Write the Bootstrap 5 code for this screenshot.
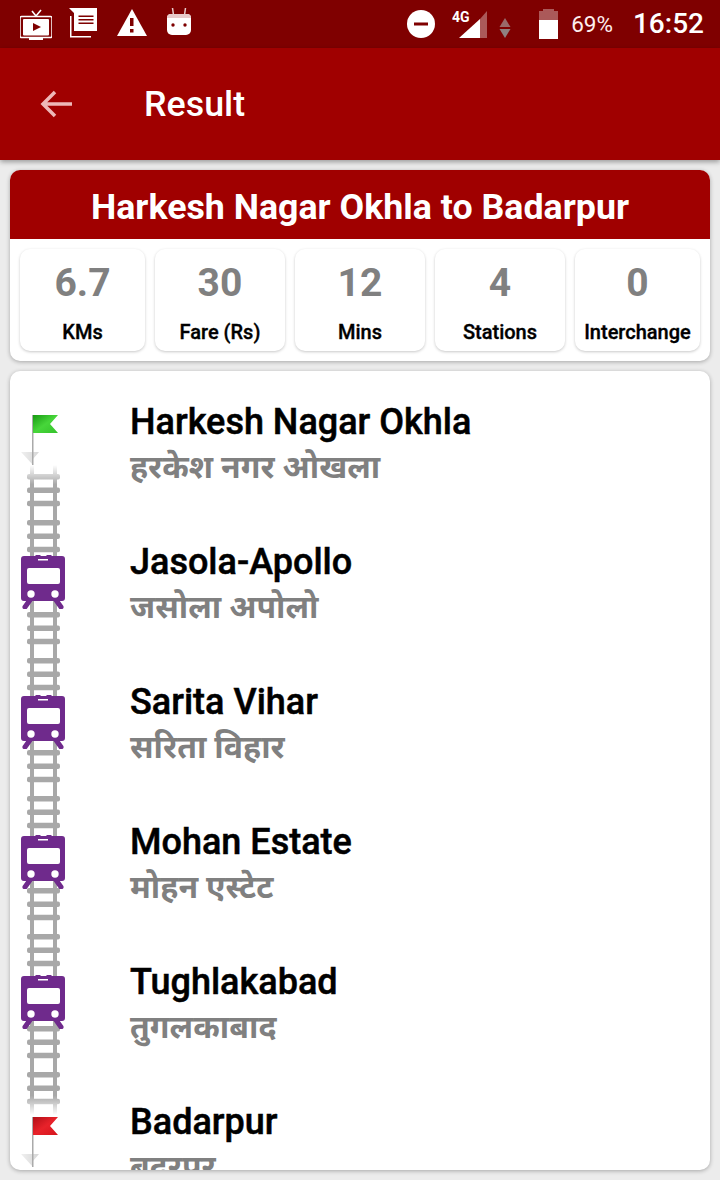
<!DOCTYPE html>
<html lang="en"><head><meta charset="utf-8"><title>Result</title>
<link rel="stylesheet" href="https://cdn.jsdelivr.net/npm/bootstrap@5.3.0/dist/css/bootstrap.min.css">
<style>
html,body{height:1180px;overflow:hidden}
body{background:#ececec;font-family:Roboto,"Noto Sans","Noto Sans Devanagari","Lohit Devanagari",sans-serif;color:#000}
.sbar{height:48px;background:#7f0000;color:#fff;padding:0 16px 0 20px}
.sbar svg{display:block;flex:none}
.ic-doc{margin-left:17px;margin-top:-2px}
.ic-warn{margin-left:18px;margin-top:-2px}
.ic-bot{margin-left:20px;margin-top:-4px}
.ic-sig{margin-left:17px}
.ic-arr{margin-left:11px;margin-top:7px}
.ic-bat{margin-left:28px}
.pct{font-size:22.5px;line-height:48px;margin-left:13px;color:#fdeeee}
.clock{font-size:28px;line-height:48px;font-weight:500;margin-left:20px}
.tbar{height:112px;background:#a00000;color:#fff;box-shadow:0 2px 5px rgba(0,0,0,.35);padding-left:38px;position:relative}
.ttl{font-size:35.8px;font-weight:500;margin-left:70px;margin-top:1px}
.pane{margin:10px 10px 0;background:#fff;border-radius:10px;box-shadow:0 1px 4px rgba(0,0,0,.3);overflow:hidden}
.phead{height:69px;background:#a00000;color:#fff;font-size:35.75px;font-weight:700;line-height:74px;text-align:center}
.stats{padding:10px;gap:10px;height:122px}
.tile{background:#fff;border-radius:10px;box-shadow:0 1px 3px rgba(0,0,0,.22);text-align:center;height:102px}
.tile:first-child,.tile:last-child{flex:0 0 125px}
.tile:not(:first-child):not(:last-child){flex:0 0 130px}
.num{font-size:39px;font-weight:700;color:#808080;line-height:46px;margin-top:11px}
.lbl{font-size:20px;font-weight:500;line-height:24px;margin-top:14px;white-space:nowrap;-webkit-text-stroke:.35px currentColor}
.route{height:799px;position:relative}
.rail{position:absolute;left:17px;top:94px}
.stop{height:140px;position:relative}
.mk{width:120px;flex:none;padding-left:11px}
.mk-train{margin-top:44px}
.mk-flag{margin-top:44px}
.mk-flag2{margin-top:46px}
.nm{font-size:36px;font-weight:500;line-height:40px;padding-top:31px;-webkit-text-stroke:.5px currentColor}
.hi{font-size:32px;font-weight:700;line-height:40px;color:#808080;margin-top:5px}
</style></head><body>
<div class="sbar d-flex align-items-center">
<svg width="32" height="32" viewBox="0 0 32 32"><path d="M1.500 8.500h29a1.500 1.500 0 0 1 1.500 1.500v18a1.500 1.500 0 0 1-1.500 1.500h-29A1.500 1.500 0 0 1 0 28V10a1.500 1.500 0 0 1 1.500-1.500z" fill="none" stroke="#fff" stroke-width="1.500"/><rect x="3" y="11" width="26" height="16.500" rx="1" fill="#fff"/><path d="M12 3l4 5 5-6" fill="none" stroke="#fff" stroke-width="1.600"/><path d="M9 30h14v2H9z" fill="#fff"/><path d="M13 15l8 4-8 4z" fill="#7f0000"/></svg>
<svg class="ic-doc" width="30" height="30" viewBox="0 0 30 30"><path d="M1 8h1.500v20H22v1.500H1z" fill="#fff"/><path d="M0 0h28v23H5V5z" fill="#fff"/><path d="M9.500 7.500h15V9h-15zM9.500 11h15v1.500h-15zM9.500 14.500h15V16h-15z" fill="#7f0000"/></svg>
<svg class="ic-warn" width="30" height="28" viewBox="0 0 30 28"><path d="M15 0l15 27H0z" fill="#fff"/><path d="M13 9h3.500v8H13zM13 20h3.500v3.500H13z" fill="#7f0000"/></svg>
<svg class="ic-bot" width="24" height="28" viewBox="0 0 24 28"><path d="M5.500 0l1 7M18.500 0l-1 7" stroke="#e8caca" stroke-width="1.500"/><path d="M0 10a4 4 0 0 1 4-4h16a4 4 0 0 1 4 4v12a5 5 0 0 1-5 5H5a5 5 0 0 1-5-5z" fill="#fff"/><path d="M0 10a4 4 0 0 1 4-4h16a4 4 0 0 1 4 4z" fill="#e8caca"/><circle cx="6" cy="17" r="1.700" fill="#7f0000"/><circle cx="18" cy="17" r="1.700" fill="#7f0000"/></svg>
<div class="ms-auto"></div>
<svg width="28" height="28" viewBox="0 0 28 28"><circle cx="14" cy="14" r="14" fill="#fff"/><rect x="7" y="12.500" width="14" height="3" fill="#7f0000"/></svg>
<svg class="ic-sig" width="36" height="32" viewBox="0 0 36 32"><path d="M7 30L28 11v19z" fill="#fff"/><path d="M28 11l7-8v27h-7z" fill="#fff" opacity=".35"/><text x="0" y="14" fill="#fff" font-family="Roboto,sans-serif" font-weight="700" font-size="14">4G</text></svg>
<svg class="ic-arr" width="12" height="20" viewBox="0 0 12 20"><path d="M6 0l5.500 9H.500z" fill="#9a6a6a"/><path d="M.500 11h11L6 20z" fill="#8f8080"/></svg>
<svg class="ic-bat" width="19" height="30" viewBox="0 0 19 30"><path d="M4 0h11v2h4v10H0V2h4z" fill="#fff" opacity=".35"/><path d="M0 11h19v19H0z" fill="#fff"/></svg>
<span class="pct">69%</span><span class="clock">16:52</span>
</div>
<div class="tbar d-flex align-items-center">
<svg width="36" height="36" viewBox="0 0 36 36"><path d="M34 18H5M17 6L5 18l12 12" fill="none" stroke="#eeb8b8" stroke-width="3.500"/></svg>
<span class="ttl">Result</span>
</div>
<div class="pane">
<div class="phead">Harkesh Nagar Okhla to Badarpur</div>
<div class="stats d-flex">
<div class="tile"><div class="num">6.7</div><div class="lbl">KMs</div></div>
<div class="tile"><div class="num">30</div><div class="lbl">Fare (Rs)</div></div>
<div class="tile"><div class="num">12</div><div class="lbl">Mins</div></div>
<div class="tile"><div class="num">4</div><div class="lbl">Stations</div></div>
<div class="tile"><div class="num">0</div><div class="lbl">Interchange</div></div>
</div>
</div>
<div class="pane route">
<svg class="rail" width="33" height="650" viewBox="0 0 33 650"><defs>
<pattern id="ties" width="33" height="46" patternUnits="userSpaceOnUse" y="9"><rect y="0" width="33" height="5.500" rx="2" fill="#a8a8a8"/><rect y="13.400" width="33" height="5.500" rx="2" fill="#a8a8a8"/><rect y="26.800" width="33" height="5.500" rx="2" fill="#a8a8a8"/></pattern>
<linearGradient id="fd" x1="0" y1="0" x2="0" y2="1"><stop offset="0" stop-color="#fff" stop-opacity="0"/><stop offset=".03" stop-color="#fff"/><stop offset=".97" stop-color="#fff"/><stop offset="1" stop-color="#fff" stop-opacity="0"/></linearGradient>
<mask id="fm"><rect width="33" height="650" fill="url(#fd)"/></mask>
<symbol id="trn" viewBox="0 0 44 54"><path d="M4 1h10l1-1h4l1 1h5l1-1h4l1 1h10q3 0 3 3v39q0 3-3 3H3q-3 0-3-3V4q0-3 3-3z" fill="#6f2a8c"/><path d="M9 45l-5 7M35 45l5 7" stroke="#6f2a8c" stroke-width="5" stroke-linecap="round"/><rect x="6" y="13" width="33" height="16" rx="2" fill="#fff"/><rect x="17" y="4" width="10" height="1.500" fill="#fff"/><circle cx="10" cy="39" r="3.700" fill="#fff"/><circle cx="34" cy="39" r="3.700" fill="#fff"/></symbol>
<linearGradient id="gf" x1="0" x2="1" y1="0" y2="1"><stop offset="0" stop-color="#179a12"/><stop offset=".5" stop-color="#47d63a"/><stop offset="1" stop-color="#35c22c"/></linearGradient>
<linearGradient id="rf" x1="0" x2="1" y1="0" y2="1"><stop offset="0" stop-color="#b00f17"/><stop offset=".5" stop-color="#e8222a"/><stop offset="1" stop-color="#d5151d"/></linearGradient>
<linearGradient id="sh" x1="0" x2="1" y1="0" y2="0"><stop offset="0" stop-color="#f0f0f0"/><stop offset="1" stop-color="#d6d6d6"/></linearGradient>
</defs>
<g mask="url(#fm)"><rect width="33" height="650" fill="url(#ties)"/><rect x="3" width="4" height="650" fill="#a8a8a8"/><rect x="26" width="4" height="650" fill="#a8a8a8"/></g></svg>
<div class="stop d-flex"><div class="mk mk-flag"><svg width="38" height="50" viewBox="0 0 38 50"><path d="M0 37h18l-6 7v6z" fill="url(#sh)"/><rect x="11" width="1.500" height="50" fill="#aaa"/><path d="M12 0h25l-8 9 8 9H12z" fill="url(#gf)"/></svg></div><div><div class="nm">Harkesh Nagar Okhla</div><div class="hi">हरकेश नगर ओखला</div></div></div>
<div class="stop d-flex"><div class="mk mk-train"><svg width="44" height="54"><use href="#trn"/></svg></div><div><div class="nm">Jasola-Apollo</div><div class="hi">जसोला अपोलो</div></div></div>
<div class="stop d-flex"><div class="mk mk-train"><svg width="44" height="54"><use href="#trn"/></svg></div><div><div class="nm">Sarita Vihar</div><div class="hi">सरिता विहार</div></div></div>
<div class="stop d-flex"><div class="mk mk-train"><svg width="44" height="54"><use href="#trn"/></svg></div><div><div class="nm">Mohan Estate</div><div class="hi">मोहन एस्टेट</div></div></div>
<div class="stop d-flex"><div class="mk mk-train"><svg width="44" height="54"><use href="#trn"/></svg></div><div><div class="nm">Tughlakabad</div><div class="hi">तुगलकाबाद</div></div></div>
<div class="stop d-flex"><div class="mk mk-flag2"><svg width="38" height="50" viewBox="0 0 38 50"><path d="M0 37h18l-6 7v6z" fill="url(#sh)"/><rect x="11" width="1.500" height="50" fill="#aaa"/><path d="M12 0h25l-8 9 8 9H12z" fill="url(#rf)"/></svg></div><div><div class="nm">Badarpur</div><div class="hi">बदरपुर</div></div></div>
</div>
</body></html>
